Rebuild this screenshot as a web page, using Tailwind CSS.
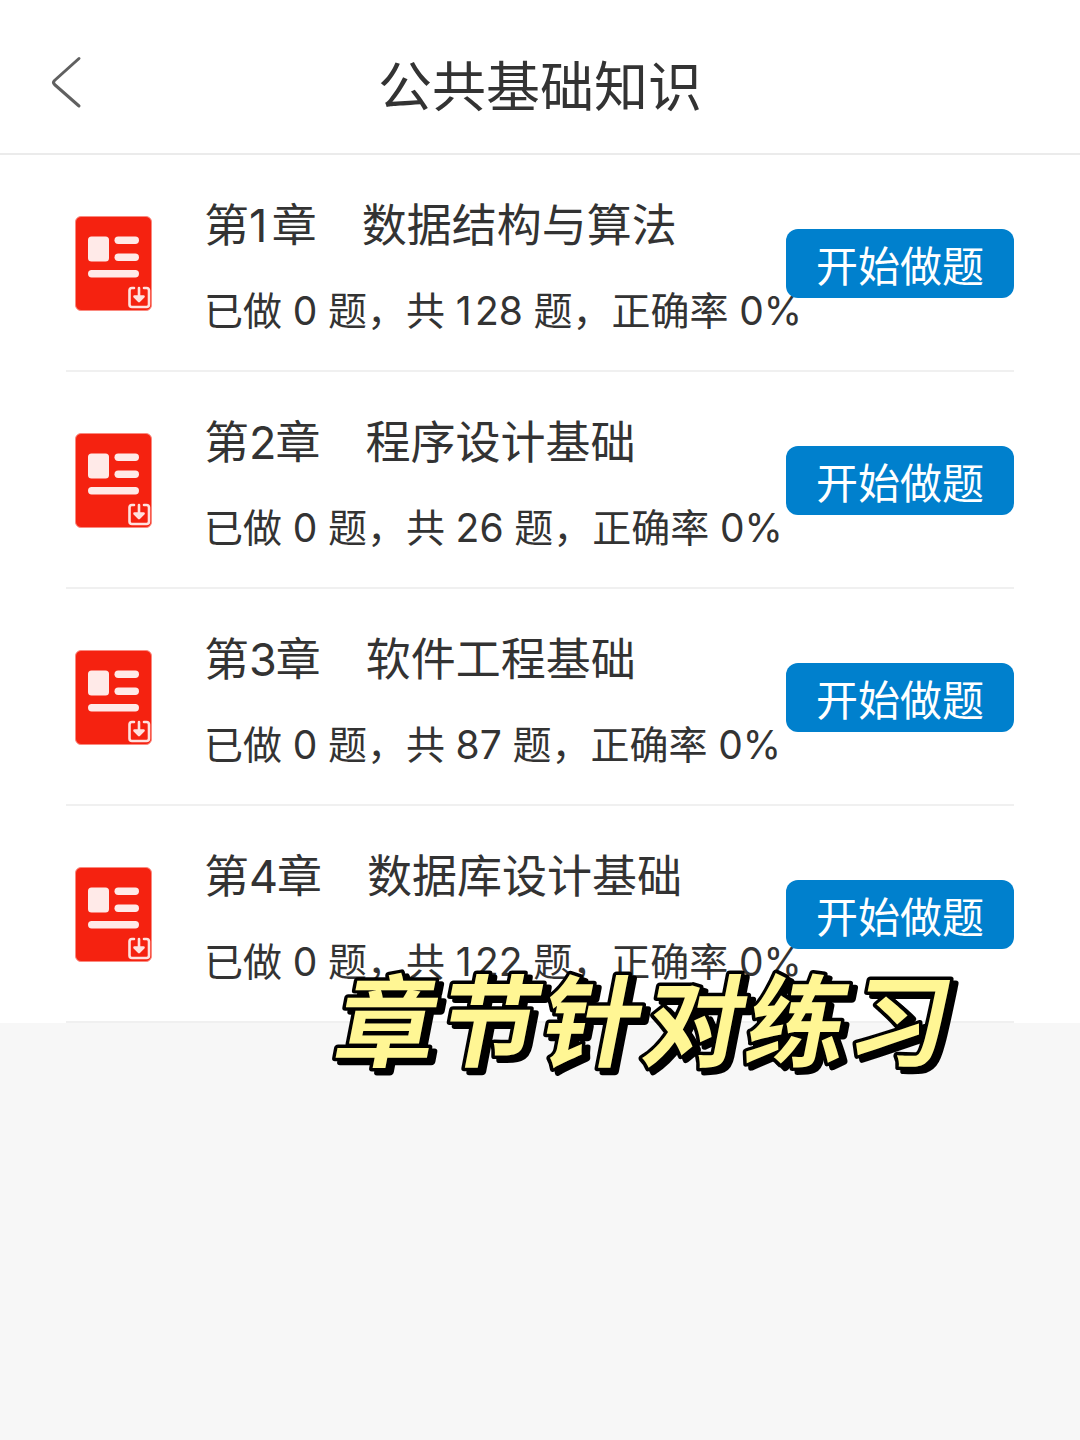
<!DOCTYPE html>
<html lang="zh-CN">
<head>
   <meta charset="UTF-8">
   <meta name="viewport" content="width=device-width, initial-scale=1.0">
   <title>公共基础知识</title>
   <!-- Tailwind CSS CDN -->
   <script src="https://cdn.jsdelivr.net/npm/@tailwindcss/browser@4"></script>
</head>
<body class="bg-[#f7f7f7] text-[#333] font-['Inter','Noto_Sans_CJK_SC',sans-serif]">
   <!-- Shared chapter icon -->
   <svg class="hidden">
      <symbol id="chapter" viewBox="0 0 78 96">
         <rect x="1.500" y="1.500" width="76" height="94" rx="5.5" fill="#f52210" stroke="#fa8a80" />
         <g fill="#ffeae8">
            <rect x="14" y="21.500" width="21" height="25" rx="3.5" />
            <rect x="40.500" y="21.500" width="24.500" height="7.500" rx="3.7" />
            <rect x="40.500" y="38.500" width="24.500" height="7.500" rx="3.7" />
            <rect x="14" y="55" width="51" height="7.500" rx="3.7" />
         </g>
         <g fill="none" stroke="#ffe1de" stroke-width="2.6" stroke-linecap="round" stroke-linejoin="round">
            <path d="M60 73h-2q-2.500 0-2.500 2.500v14q0 2.500 2.500 2.500h14.500q2.500 0 2.500-2.500v-14q0-2.500-2.500-2.500H70" />
            <path d="M65 73v12M60.500 81.500l4.500 4.500 4.500-4.500z" />
         </g>
      </symbol>
   </svg>

   <div id="app" class="relative h-[1440px] w-[1080px] overflow-hidden">
      <!-- Header -->
      <header class="grid h-[155px] grid-cols-[1fr_auto_1fr] items-center border-b-2 border-[#ebebeb] bg-white pt-[18px]">
         <svg class="-mt-[6px] ml-[50px] h-[54px] w-[34px]" viewBox="0 0 34 54" fill="none" stroke="#606060" stroke-width="3" stroke-linecap="round" stroke-linejoin="round">
            <path d="M29 2.500 4.500 24.500q-2 2 0 4L29 50" />
         </svg>
         <h1 class="pt-[5px] text-[54px] leading-[60px]">公共基础知识</h1>
      </header>

      <!-- Chapter list -->
      <main class="bg-white px-[66px]">
         <section class="flex h-[217px] items-center border-b-2 border-[#f0f0f0] pt-px">
            <svg class="ml-2 h-24 w-[78px] shrink-0"><use href="#chapter" /></svg>
            <div class="ml-[52px] w-[582px] pt-[8px] whitespace-nowrap">
               <h2 class="text-[45px] leading-[60px]">第<span class="tracking-[4.5px]">1</span>章　数据结构与算法</h2>
               <p class="mt-[27px] text-[39px] leading-[56px] [word-spacing:-0.3px]">已做 0 题，共 <span class="tracking-[3.5px]">1</span>28 题，正确率 0%</p>
            </div>
            <button class="h-[69px] w-[228px] shrink-0 rounded-xl bg-[#0080cd] pt-[6px] text-[42px] leading-[63px] text-white">开始做题</button>
         </section>
         <section class="flex h-[217px] items-center border-b-2 border-[#f0f0f0] pt-px">
            <svg class="ml-2 h-24 w-[78px] shrink-0"><use href="#chapter" /></svg>
            <div class="ml-[52px] w-[582px] pt-[8px] whitespace-nowrap">
               <h2 class="text-[45px] leading-[60px]">第<span class="tracking-[-1px]">2</span>章　程序设计基础</h2>
               <p class="mt-[27px] text-[39px] leading-[56px] [word-spacing:-0.3px]">已做 0 题，共 26 题，正确率 0%</p>
            </div>
            <button class="h-[69px] w-[228px] shrink-0 rounded-xl bg-[#0080cd] pt-[6px] text-[42px] leading-[63px] text-white">开始做题</button>
         </section>
         <section class="flex h-[217px] items-center border-b-2 border-[#f0f0f0] pt-px">
            <svg class="ml-2 h-24 w-[78px] shrink-0"><use href="#chapter" /></svg>
            <div class="ml-[52px] w-[582px] pt-[8px] whitespace-nowrap">
               <h2 class="text-[45px] leading-[60px]">第<span class="tracking-[-1px]">3</span>章　软件工程基础</h2>
               <p class="mt-[27px] text-[39px] leading-[56px] [word-spacing:-0.3px]">已做 0 题，共 87 题，正确率 0%</p>
            </div>
            <button class="h-[69px] w-[228px] shrink-0 rounded-xl bg-[#0080cd] pt-[6px] text-[42px] leading-[63px] text-white">开始做题</button>
         </section>
         <section class="flex h-[217px] items-center border-b-2 border-[#f0f0f0] pt-px">
            <svg class="ml-2 h-24 w-[78px] shrink-0"><use href="#chapter" /></svg>
            <div class="ml-[52px] w-[582px] pt-[8px] whitespace-nowrap">
               <h2 class="text-[45px] leading-[60px]">第<span class="tracking-[-1px]">4</span>章　数据库设计基础</h2>
               <p class="mt-[27px] text-[39px] leading-[56px] [word-spacing:-0.3px]">已做 0 题，共 <span class="tracking-[3.5px]">1</span>22 题，正确率 0%</p>
            </div>
            <button class="h-[69px] w-[228px] shrink-0 rounded-xl bg-[#0080cd] pt-[6px] text-[42px] leading-[63px] text-white">开始做题</button>
         </section>
      </main>

      <!-- Caption sticker over the list -->
      <svg class="absolute left-[320px] top-[950px] h-[140px] w-[660px] drop-shadow-[5px_4px_0_#000]" viewBox="0 0 660 140">
         <text class="font-bold" transform="translate(11 109) skewX(-11)" font-size="100" letter-spacing="2.600" fill="#fff694" stroke="#000" stroke-width="7" stroke-linejoin="round" paint-order="stroke">章节针对练习</text>
      </svg>
   </div>
</body>
</html>
